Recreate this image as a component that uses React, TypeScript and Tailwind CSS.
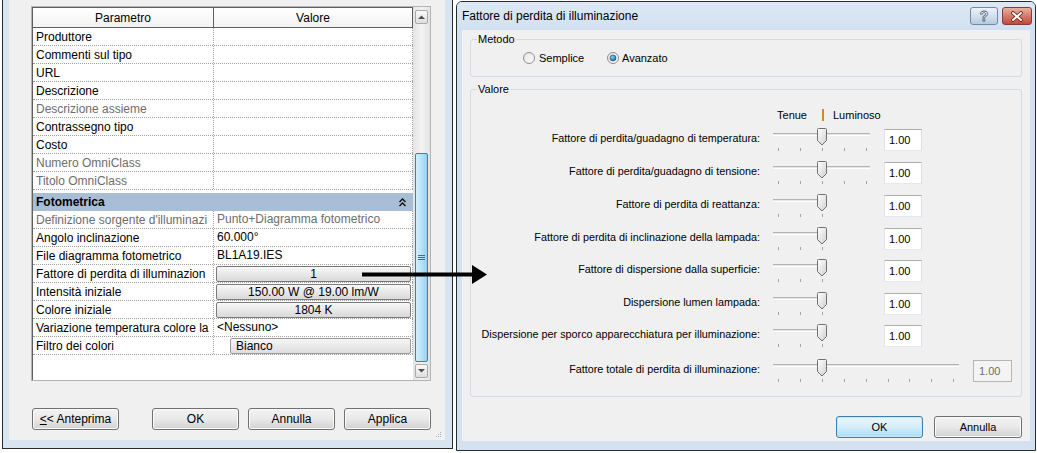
import React from "react";

type Row = { p: string; v?: string; dim?: boolean; kind?: "btn" | "swatch" };

const topRows: Row[] = [
  { p: "Produttore" },
  { p: "Commenti sul tipo" },
  { p: "URL" },
  { p: "Descrizione" },
  { p: "Descrizione assieme", dim: true },
  { p: "Contrassegno tipo" },
  { p: "Costo" },
  { p: "Numero OmniClass", dim: true },
  { p: "Titolo OmniClass", dim: true },
];

const fotoRows: Row[] = [
  { p: "Definizione sorgente d'illuminazi", v: "Punto+Diagramma fotometrico", dim: true },
  { p: "Angolo inclinazione", v: "60.000°" },
  { p: "File diagramma fotometrico", v: "BL1A19.IES" },
  { p: "Fattore di perdita di illuminazion", v: "1", kind: "btn" },
  { p: "Intensità iniziale", v: "150.00 W @ 19.00 lm/W", kind: "btn" },
  { p: "Colore iniziale", v: "1804 K", kind: "btn" },
  { p: "Variazione temperatura colore la", v: "<Nessuno>" },
  { p: "Filtro dei colori", v: "Bianco", kind: "swatch" },
];

// righe del dialogo: altezza = distanza fino alla riga successiva
const sliders = [
  { label: "Fattore di perdita/guadagno di temperatura:", ticks: 5, track: 97, h: 33 },
  { label: "Fattore di perdita/guadagno di tensione:", ticks: 5, track: 97, h: 33 },
  { label: "Fattore di perdita di reattanza:", ticks: 3, track: 52, h: 33 },
  { label: "Fattore di perdita di inclinazione della lampada:", ticks: 3, track: 52, h: 32 },
  { label: "Fattore di dispersione dalla superficie:", ticks: 3, track: 52, h: 33 },
  { label: "Dispersione lumen lampada:", ticks: 3, track: 52, h: 32 },
  { label: "Dispersione per sporco apparecchiatura per illuminazione:", ticks: 3, track: 52, h: 35 },
];

const btn =
  "h-[22px] rounded-[3px] border border-[#707070] bg-linear-to-b from-[#f3f3f3] via-[#e9e9e9] to-[#d2d2d2] shadow-[inset_0_0_0_1px_#fbfbfb] flex items-center justify-center";

function PropRow({ r }: { r: Row }) {
  return (
    <div className="flex h-[18px] border-b border-dotted border-[#a0a0a0]">
      <div
        className={`w-[181px] shrink-0 overflow-hidden whitespace-nowrap border-r border-dotted border-[#a0a0a0] pl-[3px] leading-[19px] ${
          r.dim ? "text-[#6d6d6d]" : ""
        }`}
      >
        {r.p}
      </div>
      <div className="flex w-[199px] shrink-0 items-center border-r border-dotted border-[#a0a0a0]">
        {r.kind === "btn" ? (
          <div className="ml-[2px] mr-[1px] h-[16px] flex-1 rounded-[2px] border border-[#7a7a7a] bg-linear-to-b from-[#f8f8f8] to-[#d9d9d9] text-center leading-[15px]">
            {r.v}
          </div>
        ) : r.kind === "swatch" ? (
          <>
            <div className="ml-[2px] h-[16px] w-[14px] bg-white" />
            <div className="mr-[1px] h-[16px] flex-1 rounded-[2px] border border-[#9a9a9a] bg-linear-to-b from-[#f6f6f6] to-[#dedede] pl-[5px] leading-[15px]">
              {r.v}
            </div>
          </>
        ) : (
          <div className={`pl-[3px] leading-[19px] whitespace-nowrap ${r.dim ? "text-[#6d6d6d]" : ""}`}>{r.v}</div>
        )}
      </div>
    </div>
  );
}

function Scrollbar() {
  return (
    <div className="flex w-[17px] shrink-0 flex-col items-center bg-linear-to-r from-[#e3e3e3] via-[#f3f3f3] to-[#e3e3e3]">
      <div className="mt-[3px] flex h-[14px] w-[13px] items-center justify-center rounded-[2px] border border-[#a9a9a9] bg-linear-to-b from-[#fafafa] to-[#dedede]">
        <svg width="7" height="4">
          <path d="M0 4 L3.5 0.5 L7 4 Z" fill="#4e4e4e" />
        </svg>
      </div>
      <div className="mt-[129px] flex h-[209px] w-[13px] items-center justify-center rounded-[2px] border border-[#3c7fb1] bg-linear-to-r from-[#d2eefc] via-[#b9e1f7] to-[#97cfee]">
        <svg width="7" height="7">
          <path d="M0 1.5 H7 M0 3.5 H7 M0 5.5 H7" stroke="#3a6f94" strokeWidth="1" />
        </svg>
      </div>
      <div className="mt-[2px] flex h-[14px] w-[13px] items-center justify-center rounded-[2px] border border-[#a9a9a9] bg-linear-to-b from-[#fafafa] to-[#dedede]">
        <svg width="7" height="4">
          <path d="M0 0 L3.5 3.5 L7 0 Z" fill="#4e4e4e" />
        </svg>
      </div>
    </div>
  );
}

function LeftWindow() {
  return (
    <div className="ml-[2px] flex h-[449px] w-[451px] shrink-0 flex-col border-x border-b border-[#2b2b2b] bg-[#d9e4f1] pb-[8px] pl-[6px] pr-[7px]">
      <div className="relative flex flex-1 flex-col bg-[#f0f0f0] pl-[22px] pt-[6px] text-[12px]">
        <div className="flex h-[375px] w-[400px] border border-[#b4b4b4]">
          <div className="flex w-[381px] shrink-0 flex-col border-l border-t border-[#5f5f5f] bg-white">
            <div className="flex h-[20px] shrink-0 border-b border-[#5f5f5f] bg-linear-to-b from-white to-[#f2f2f2]">
              <div className="w-[181px] shrink-0 border-r border-[#5f5f5f] text-center leading-[21px]">Parametro</div>
              <div className="w-[199px] shrink-0 border-r border-[#5f5f5f] text-center leading-[21px]">Valore</div>
            </div>
            {topRows.map((r) => (
              <PropRow key={r.p} r={r} />
            ))}
            <div className="mt-[3px] flex h-[18px] w-[380px] items-center justify-between bg-[#a8bdd6] pl-[3px] pr-[7px] font-bold">
              <span>Fotometrica</span>
              <svg width="7" height="9">
                <path d="M0.5 4 L3.5 1 L6.5 4 M0.5 8 L3.5 5 L6.5 8" stroke="#111" strokeWidth="1.4" fill="none" />
              </svg>
            </div>
            {fotoRows.map((r) => (
              <PropRow key={r.p} r={r} />
            ))}
            <div className="flex-1" />
          </div>
          <Scrollbar />
        </div>
        <div className="mt-[27px] flex">
          <div className={`${btn} ml-[1px] w-[87px]`}>
            <span>
              <span className="underline">&lt;</span>&lt; Anteprima
            </span>
          </div>
          <div className={`${btn} ml-[33px] w-[87px]`}>OK</div>
          <div className={`${btn} ml-[9px] w-[87px]`}>Annulla</div>
          <div className={`${btn} ml-[9px] w-[87px]`}>Applica</div>
        </div>
        <svg className="absolute bottom-[2px] right-[3px]" width="7" height="7">
          <path d="M5.5 1 v1 M3.5 3 v1 M5.5 3 v1 M1.5 5 v1 M3.5 5 v1 M5.5 5 v1" stroke="#b0b0b0" />
        </svg>
      </div>
    </div>
  );
}

function Radio({ checked }: { checked?: boolean }) {
  return (
    <svg width="12" height="12" className="shrink-0">
      <defs>
        <linearGradient id="rb" x1="0" y1="0" x2="1" y2="1">
          <stop offset="0" stopColor="#e2e2e2" />
          <stop offset="1" stopColor="#ffffff" />
        </linearGradient>
        <radialGradient id="rd" cx="0.4" cy="0.35" r="0.7">
          <stop offset="0" stopColor="#8fd0f7" />
          <stop offset="1" stopColor="#0e5d9a" />
        </radialGradient>
      </defs>
      <circle cx="6" cy="6" r="5.5" fill="url(#rb)" stroke="#8b8c8c" />
      {checked && <circle cx="6" cy="6" r="3" fill="url(#rd)" stroke="#1b4f7a" strokeWidth="0.6" />}
    </svg>
  );
}

function Slider({ width, track, ticks }: { width: number; track: number; ticks: number }) {
  const cx = 49;
  return (
    <svg width={width} height={26} className="shrink-0">
      <defs>
        <linearGradient id="th" x1="0" y1="0" x2="1" y2="1">
          <stop offset="0" stopColor="#ffffff" />
          <stop offset="1" stopColor="#d0d0d0" />
        </linearGradient>
      </defs>
      <line x1={0} y1={5.5} x2={track} y2={5.5} stroke="#b3b3b3" />
      <line x1={0} y1={6.5} x2={track} y2={6.5} stroke="#e6e6e6" />
      <line x1={0} y1={7.5} x2={track} y2={7.5} stroke="#ffffff" />
      {Array.from({ length: ticks }).map((_, i) => {
        const x = Math.round(5 + 21.9 * i) + 0.5;
        return <line key={i} x1={x} y1={20} x2={x} y2={23} stroke="#a3a3a3" />;
      })}
      <path
        d={`M${cx - 4.5} 1.5 Q${cx - 4.5} 0.5 ${cx - 3.5} 0.5 H${cx + 3.5} Q${cx + 4.5} 0.5 ${cx + 4.5} 1.5 V12.5 L${cx} 17 L${cx - 4.5} 12.5 Z`}
        fill="url(#th)"
        stroke="#707070"
      />
    </svg>
  );
}

function RightWindow() {
  return (
    <div className="ml-[3px] mt-[1px] flex h-[450px] w-[580px] shrink-0 flex-col rounded-t-[6px] border border-[#2b2b2b] bg-[#d3e1f1]">
      <div className="flex h-[28px] shrink-0 items-center rounded-t-[5px] bg-linear-to-b from-[#dde8f5] to-[#d1e0f0] pl-[5px] pr-[3px] text-[12px]">
        <span className="flex-1">Fattore di perdita di illuminazione</span>
        <div className="flex h-[18px] w-[28px] items-center justify-center rounded-[3px] border border-[#7089a8] bg-linear-to-b from-[#edf2f8] via-[#d5e0ec] to-[#b7c9de]">
          <span className="text-[14px] font-bold leading-none text-white [-webkit-text-stroke:0.8px_#4e6583]">?</span>
        </div>
        <div className="ml-[4px] flex h-[18px] w-[30px] items-center justify-center rounded-[3px] border border-[#8a3a30] bg-linear-to-b from-[#eab0a4] via-[#d67a6a] to-[#c2483a]">
          <svg width="14" height="11">
            <path d="M3 2 L11 9 M11 2 L3 9" stroke="#5b1d14" strokeWidth="3.6" strokeLinecap="round" />
            <path d="M3 2 L11 9 M11 2 L3 9" stroke="#ffffff" strokeWidth="2" strokeLinecap="round" />
          </svg>
        </div>
      </div>
      <div className="mx-[5px] mb-[9px] flex flex-1 flex-col bg-[#f0f0f0] px-[8px] text-[11px]">
        <fieldset className="mt-[2px] rounded-[3px] border border-[#d2dce3] pb-[11px] pt-[5px]">
          <legend className="ml-[6px] px-[1px] leading-[14px]">Metodo</legend>
          <div className="flex h-[14px] items-center pl-[52px]">
            <div className="flex w-[84px] items-center">
              <Radio />
              <span className="ml-[4px]">Semplice</span>
            </div>
            <Radio checked />
            <span className="ml-[3px]">Avanzato</span>
          </div>
        </fieldset>
        <fieldset className="mt-[5px] rounded-[3px] border border-[#d2dce3] pb-[11px] pt-[12px]">
          <legend className="ml-[6px] px-[1px] leading-[14px]">Valore</legend>
          <div className="mb-[6px] flex h-[14px] items-center">
            <div className="w-[302px] shrink-0" />
            <span className="w-[49px] pr-[15px] text-right">Tenue</span>
            <div className="h-[12px] w-[2px] bg-[#d2892c]" />
            <span className="ml-[9px]">Luminoso</span>
          </div>
          {sliders.map((s) => (
            <div key={s.label} className="flex items-start" style={{ height: s.h }}>
              <div className="h-[20px] w-[289px] shrink-0 whitespace-nowrap text-right text-[10.8px] leading-[20px]">{s.label}</div>
              <div className="ml-[13px]">
                <Slider width={111} track={s.track} ticks={s.ticks} />
              </div>
              <div className="mt-[1px] h-[22px] w-[38px] border border-[#abadb3] border-b-[#e3e9ef] border-l-[#e2e3ea] border-r-[#dbdfe6] bg-white pl-[4px] leading-[20px]">
                1.00
              </div>
            </div>
          ))}
          <div className="flex h-[26px] items-start">
            <div className="h-[20px] w-[289px] shrink-0 whitespace-nowrap text-right text-[10.8px] leading-[20px]">
              Fattore totale di perdita di illuminazione:
            </div>
            <div className="ml-[13px]">
              <Slider width={200} track={186} ticks={9} />
            </div>
            <div className="mt-[1px] h-[22px] w-[39px] border border-[#b5b5b5] bg-[#f4f4f4] pl-[5px] leading-[20px] text-[#6d6d6d]">
              1.00
            </div>
          </div>
        </fieldset>
        <div className="mt-[19px] flex justify-end gap-[11px]">
          <div className="flex h-[22px] w-[87px] items-center justify-center rounded-[3px] border border-[#3c7fb1] bg-linear-to-b from-[#eaf6fd] via-[#d6eefb] to-[#a9daf5] shadow-[inset_0_0_0_1px_#c4e8fb]">
            OK
          </div>
          <div className={`${btn} w-[88px]`}>Annulla</div>
        </div>
      </div>
    </div>
  );
}

export default function App() {
  return (
    <div className="relative flex h-[453px] w-[1037px] items-start overflow-hidden bg-white font-['Liberation_Sans',Arial,sans-serif] text-black">
      <LeftWindow />
      <RightWindow />
      {/* freccia tra i due pannelli */}
      <svg className="absolute left-[360px] top-[264px]" width="130" height="21">
        <line x1="2" y1="10.5" x2="114" y2="10.5" stroke="#000" strokeWidth="4" />
        <path d="M112 1 L127 10.5 L112 20 Z" fill="#000" />
      </svg>
    </div>
  );
}
